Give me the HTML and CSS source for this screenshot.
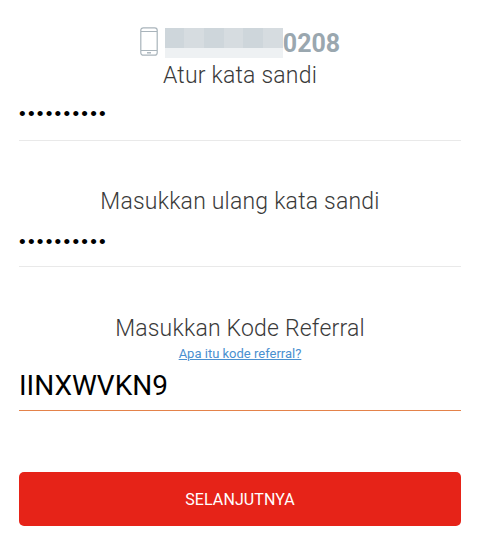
FILE: index.html
```html
<!DOCTYPE html>
<html lang="id">
<head>
<meta charset="utf-8">
<title>Atur kata sandi</title>
<link rel="stylesheet" href="styles.css">
</head>
<body>
<main class="page">
  <div class="phone-row">
    <svg class="phone-icon" width="18" height="29" viewBox="0 0 18 29" fill="none" stroke="#a9b4bb" stroke-width="1.2">
      <rect x="0.8" y="0.8" width="16.4" height="27.4" rx="2.5"/>
      <path d="M1 4.5h16M1 23.5h16"/>
      <path d="M7 25.8h4" stroke-width="1.4"/>
    </svg>
    <div class="mask">
      <i></i><i class="b"></i><i></i><i class="b"></i><i></i><i class="b"></i>
    </div>
    <span class="digits">0208</span>
  </div>

  <section class="field first">
    <h2 class="label">Atur kata sandi</h2>
    <div class="dots">••••••••••</div>
    <div class="line"></div>
  </section>

  <section class="field second">
    <h2 class="label">Masukkan ulang kata sandi</h2>
    <div class="dots">••••••••••</div>
    <div class="line"></div>
  </section>

  <section class="field third">
    <h2 class="label">Masukkan Kode Referral</h2>
    <a class="help" href="#">Apa itu kode referral?</a>
    <div class="code">IINXWVKN9</div>
    <div class="line active"></div>
  </section>

  <button class="next" type="button">SELANJUTNYA</button>
</main>
</body>
</html>
```
FILE: styles.css
```css
* { box-sizing: border-box; }
html, body { margin: 0; padding: 0; background: #fff; }
body { width: 480px; height: 550px; overflow: hidden; font-family: Roboto, "Liberation Sans", sans-serif; }
.page { padding: 28px 19px 0 19px; display: flex; flex-direction: column; }
.phone-row { display: flex; align-items: flex-start; justify-content: center; height: 30px; }
.phone-icon { margin: -1px 7px 0 0; flex: none; }
.mask { width: 118px; height: 30px; display: grid; grid-template-columns: repeat(6, 1fr); background: linear-gradient(#0000 66%, #eef1f3 66%); flex: none; }
.mask i { display: block; height: 20px; background: #ced6db; }
.mask i.b { background: #d6dce0; }
.digits { margin-top: 2px; font-size: 25px; line-height: 28px; font-weight: 700; color: #9aa7af; }
.field { display: flex; flex-direction: column; }
.label { margin: 0; font-size: 23px; line-height: 28px; font-weight: 300; color: #3a3a3a; text-align: center; letter-spacing: 0.2px; }
.first { margin-top: 4px; }
.second { margin-top: 47px; }
.third { margin-top: 48px; }
.dots { margin-top: 11px; height: 26px; font-size: 19px; line-height: 26px; letter-spacing: 2.25px; color: #000; font-family: "Liberation Sans", sans-serif; }
.second .dots { margin-top: 13px; }
.line { height: 1px; background: #e9e9e9; margin-top: 13px; }
.second .line { margin-top: 11px; }
.help { align-self: center; margin-top: 4px; font-size: 13px; line-height: 14px; color: #4a90d0; text-decoration: underline; }
.code { font-size: 28px; line-height: 34px; color: #000; margin-top: 8px; }
.third .line.active { background: #e4824a; margin-top: 7px; }
.next { margin-top: 61px; height: 54px; width: 100%; border: 0; border-radius: 5px; background: #e62318; color: #fff; font-family: Roboto, sans-serif; font-size: 16px; font-weight: 400; letter-spacing: 0.1px; padding: 0; }
```
